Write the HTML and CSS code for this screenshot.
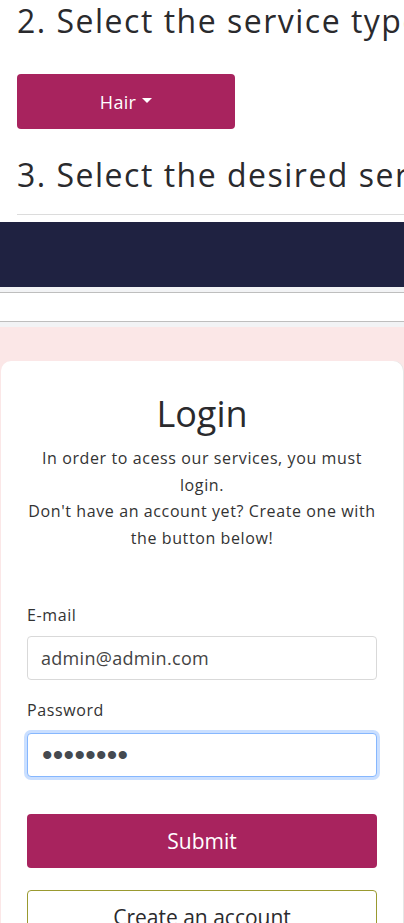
FILE: index.html
```html
<!DOCTYPE html>
<html lang="en">
<head>
<meta charset="utf-8">
<title>Login</title>
<link rel="stylesheet" href="styles.css">
</head>
<body>
<section class="booking">
  <h2 class="step">2. Select the service type</h2>
  <button class="btn btn-brand dropdown">Hair <span class="caret"></span></button>
  <h2 class="step step-3">3. Select the desired service</h2>
  <hr class="rule">
</section>
<div class="navband"></div>
<div class="strip">
  <div class="strip-inner"></div>
</div>
<main class="login-area">
  <div class="card">
    <h1 class="title">Login</h1>
    <p class="intro">In order to acess our services, you must login.<br>Don't have an account yet? Create one with the button below!</p>
    <form class="form">
      <label class="label" for="email">E-mail</label>
      <input class="field" id="email" type="email" value="admin@admin.com">
      <label class="label" for="pwd">Password</label>
      <input class="field focused" id="pwd" type="password" value="admin123">
      <button type="button" class="btn btn-brand btn-block submit">Submit</button>
      <button type="button" class="btn btn-outline btn-block">Create an account</button>
    </form>
  </div>
</main>
</body>
</html>
```
FILE: styles.css
```css
* { box-sizing: border-box; }
html, body { margin: 0; padding: 0; }
body {
  font-family: "Open Sans", Lato, sans-serif;
  color: #2b2b2e;
  background: #fff;
  overflow-x: hidden;
  width: 404px;
}
.booking {
  padding: 0 0 0 17px;
  white-space: nowrap;
  overflow: hidden;
}
.step {
  font-weight: 400;
  font-size: 32px;
  line-height: 38px;
  margin: 2px 0 0 0;
  letter-spacing: 1.5px;
  color: #2a2a2d;
}
.btn {
  font-family: inherit;
  border: 1px solid transparent;
  border-radius: 4px;
  cursor: pointer;
}
.btn-brand {
  background: #a8235e;
  color: #fff;
}
.dropdown {
  display: flex;
  align-items: center;
  justify-content: center;
  gap: 6px;
  width: 218px;
  height: 55px;
  margin-top: 34px;
  font-size: 18px;
  letter-spacing: 0.3px;
}
.caret {
  display: inline-block;
  width: 0; height: 0;
  border-left: 5px solid transparent;
  border-right: 5px solid transparent;
  border-top: 5px solid #fff;
  margin-top: -2px;
}
.step-3 { margin-top: 27px; }
.rule {
  border: 0;
  border-top: 1px solid #dcdcdc;
  margin: 20px 0 0 0;
}
.navband {
  height: 65px;
  margin-top: 7px;
  background: #1f2241;
}
.strip {
  background: #f2f3f5;
  padding: 5px 0;
}
.strip-inner {
  height: 30px;
  background: #fff;
  border-top: 1px solid #bebebe;
  border-bottom: 1px solid #bebebe;
}
.login-area {
  background: #fbe7e7;
  padding: 34px 1px 0 1px;
}
.card {
  background: #fff;
  border-radius: 10px 10px 0 0;
  padding: 31px 26px 40px 26px;
  box-shadow: 1px 0 0 #e6e6e6;
}
.title {
  text-align: center;
  font-weight: 400;
  font-size: 36px;
  line-height: 44px;
  margin: 0;
  color: #2a2a2d;
}
.intro {
  text-align: center;
  font-size: 16px;
  line-height: 26.5px;
  letter-spacing: 0.6px;
  margin: 9px 0 0 0;
  color: #333;
}
.form {
  display: flex;
  flex-direction: column;
  margin-top: 52px;
}
.label {
  font-size: 16px;
  line-height: 24px;
  letter-spacing: 0.6px;
  color: #333;
  margin-bottom: 9px;
}
.field {
  height: 44px;
  border: 1px solid #d9d9d9;
  border-radius: 4px;
  padding: 0 13px;
  font-family: inherit;
  font-size: 18px;
  letter-spacing: 0.3px;
  color: #444;
  margin-bottom: 18px;
  background: #fff;
}
.field.focused {
  border-color: #86b7fe;
  box-shadow: 0 0 0 3px rgba(13, 110, 253, 0.22);
  outline: none;
  font-family: "Liberation Sans", sans-serif;
  font-size: 30px;
  letter-spacing: 0.3px;
  color: #454a50;
  padding: 0 14px;
  margin-top: 2px;
}
.btn-block {
  width: 100%;
  font-size: 21px;
}
.submit {
  height: 54px;
  margin-top: 19px;
}
.btn-outline {
  height: 54px;
  margin-top: 22px;
  background: #fff;
  color: #2b2b2e;
  border-color: #9a9a30;
}
```
